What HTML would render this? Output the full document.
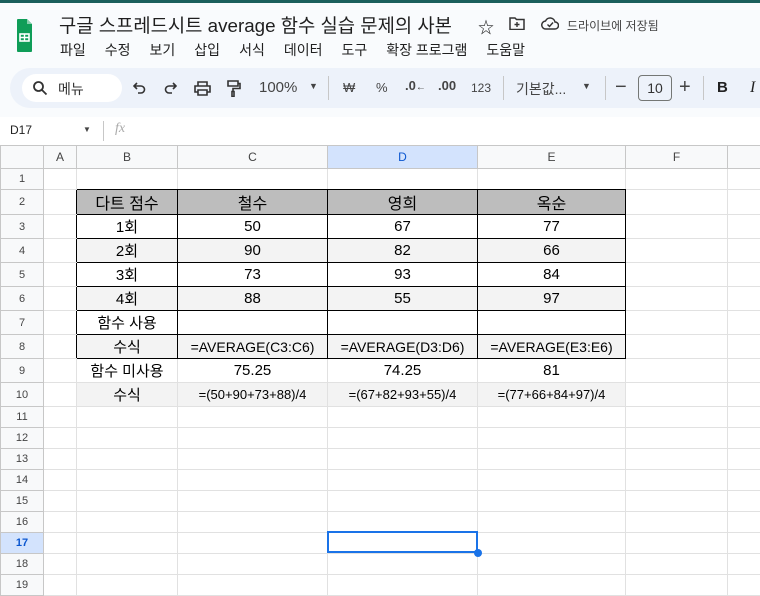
<!DOCTYPE html>
<html><head><meta charset="utf-8"><style>
*{margin:0;padding:0;box-sizing:border-box}
body{width:760px;height:593px;overflow:hidden;background:#f9fbfd;font-family:"Liberation Sans","Noto Sans CJK KR",sans-serif;position:relative;color:#1f1f1f}
.a{position:absolute;white-space:nowrap}
.menu span{margin-right:19px}
.tb{color:#444;font-size:14px}
table{position:absolute;left:0;top:145px;border-collapse:collapse;table-layout:fixed;background:#fff;width:760px}
td{border:1px solid #e1e1e1;font-size:15px;text-align:center;padding:0;overflow:hidden;white-space:nowrap;color:#000}
td.h{background:#f8f9fa;color:#444;font-size:11px;border-color:#c7c7c7}
tr.hd td{font-size:12px}
td.k{border-color:#000}
td.g{background:#bdbdbd}
td.f{background:#f3f3f3}
td.ra{border-right-color:#000}
td.bb{border-bottom-color:#000}
.s{font-size:14px}
</style></head><body>
<div class="a" style="left:0;top:0;width:760px;height:3px;background:#1b5f5c"></div>
<svg class="a" style="left:17px;top:18px" width="15" height="35" viewBox="0 0 15 35"><path d="M1 1h9l5 5v27a1 1 0 0 1-1 1H1a1 1 0 0 1-1-1V2a1 1 0 0 1 1-1z" fill="#0f9d58"/><path d="M10 1v5h5z" fill="#87ceac"/><rect x="3" y="16" width="9" height="7" fill="none" stroke="#fff" stroke-width="1.6"/><path d="M3 19.5h9M7.5 16v7" stroke="#fff" stroke-width="1.4"/></svg>
<div class="a" style="left:59px;top:11px;font-size:18.8px;color:#1f1f1f">구글 스프레드시트 average 함수 실습 문제의 사본</div>
<div class="a" style="left:478px;top:14px;font-size:16px">☆</div>
<svg class="a" style="left:509px;top:17px" width="16" height="13" viewBox="0 0 16 13"><path d="M1 1h5l1.5 1.5H15v10H1z" fill="none" stroke="#333" stroke-width="1.5"/><path d="M8 5v5M5.5 7.5h5" stroke="#333" stroke-width="1.4"/></svg>
<svg class="a" style="left:541px;top:16px" width="18" height="14" viewBox="0 0 18 14"><path d="M5 13h9a3.5 3.5 0 0 0 0-7 5 5 0 0 0-9.5-1A4 4 0 0 0 5 13z" fill="none" stroke="#333" stroke-width="1.5"/><path d="M6.5 8.5l2 2 3.5-4" fill="none" stroke="#333" stroke-width="1.4"/></svg>
<div class="a" style="left:567px;top:17px;font-size:12px;color:#444">드라이브에 저장됨</div>
<div class="a menu" style="left:60px;top:40px;font-size:14px"><span>파일</span><span>수정</span><span>보기</span><span>삽입</span><span>서식</span><span>데이터</span><span>도구</span><span>확장 프로그램</span><span>도움말</span></div>
<div class="a" style="left:10px;top:68px;width:780px;height:40px;border-radius:20px;background:#edf2fa"></div>
<div class="a" style="left:22px;top:74px;width:100px;height:28px;border-radius:14px;background:#fff"></div>
<svg class="a" style="left:32px;top:80px" width="16" height="16" viewBox="0 0 16 16"><circle cx="6.5" cy="6.5" r="4.5" fill="none" stroke="#333" stroke-width="1.8"/><path d="M10 10l4.5 4.5" stroke="#333" stroke-width="1.8"/></svg>
<div class="a tb" style="left:58px;top:79px;color:#333">메뉴</div>
<svg class="a" style="left:133px;top:82px" width="13" height="13" viewBox="0 0 13 13"><path d="M4 1L1 4l3 3M1 4h7a3.5 3.5 0 0 1 0 7H5" fill="none" stroke="#333" stroke-width="1.6"/></svg>
<svg class="a" style="left:164px;top:82px" width="13" height="13" viewBox="0 0 13 13"><path d="M9 1l3 3-3 3M12 4H5a3.5 3.5 0 0 0 0 7h3" fill="none" stroke="#333" stroke-width="1.6"/></svg>
<svg class="a" style="left:194px;top:81px" width="17" height="15" viewBox="0 0 17 15"><path d="M4 5V1h9v4M4 11H1V5h15v6h-3M4 9h9v5H4z" fill="none" stroke="#333" stroke-width="1.6"/></svg>
<svg class="a" style="left:227px;top:80px" width="14" height="17" viewBox="0 0 14 17"><path d="M1 1h10v5H1zM11 3.5h2v5H6v3M5 11.5h2v5H5z" fill="none" stroke="#333" stroke-width="1.6"/></svg>
<div class="a tb" style="left:259px;top:79px;font-size:15px">100%</div>
<div class="a tb" style="left:309px;top:81px;font-size:9px">▼</div>
<div class="a" style="left:328px;top:76px;width:1px;height:24px;background:#c7c7c7"></div>
<div class="a tb" style="left:343px;top:80px;font-size:13px">₩</div>
<div class="a tb" style="left:376px;top:80px;font-size:13px">%</div>
<div class="a tb" style="left:405px;top:78px;font-size:13px;font-weight:bold">.0<span style="font-size:10px">←</span></div>
<div class="a tb" style="left:438px;top:78px;font-size:13px;font-weight:bold">.00</div>
<div class="a tb" style="left:471px;top:81px;font-size:12px">123</div>
<div class="a" style="left:503px;top:76px;width:1px;height:24px;background:#c7c7c7"></div>
<div class="a tb" style="left:516px;top:79px">기본값...</div>
<div class="a tb" style="left:582px;top:81px;font-size:9px">▼</div>
<div class="a" style="left:605px;top:76px;width:1px;height:24px;background:#c7c7c7"></div>
<div class="a tb" style="left:615px;top:76px;font-size:20px">−</div>
<div class="a" style="left:638px;top:75px;width:34px;height:26px;border:1px solid #747775;border-radius:4px;text-align:center;font-size:14px;line-height:24px;color:#333">10</div>
<div class="a tb" style="left:679px;top:76px;font-size:20px">+</div>
<div class="a" style="left:703px;top:76px;width:1px;height:24px;background:#c7c7c7"></div>
<div class="a tb" style="left:717px;top:79px;font-weight:bold;font-size:15px;color:#222">B</div>
<div class="a tb" style="left:750px;top:79px;font-style:italic;font-size:16px;font-family:'Liberation Serif',serif;color:#222">I</div>
<div class="a" style="left:0;top:117px;width:760px;height:28px;background:#fff"></div>
<div class="a" style="left:10px;top:123px;font-size:12px;color:#222">D17</div>
<div class="a" style="left:83px;top:125px;font-size:8px;color:#444">▼</div>
<div class="a" style="left:103px;top:121px;width:1px;height:20px;background:#c7c7c7"></div>
<div class="a" style="left:115px;top:121px;font-size:14px;font-style:italic;color:#aaa;font-family:'Liberation Serif',serif">fx</div>
<table>
<colgroup><col style="width:43px"><col style="width:33px"><col style="width:101px"><col style="width:150px"><col style="width:150px"><col style="width:148px"><col style="width:102px"><col style="width:33px"></colgroup>
<tr class="hd" style="height:23px"><td class="h"></td><td class="h">A</td><td class="h">B</td><td class="h">C</td><td class="h" style="background:#d3e3fd;color:#0b57d0">D</td><td class="h">E</td><td class="h">F</td><td class="h"></td></tr>
<tr style="height:21px"><td class="h">1</td><td></td><td class="bb"></td><td class="bb"></td><td class="bb"></td><td class="bb"></td><td></td><td></td></tr>
<tr style="height:24px"><td class="h">2</td><td class="ra"></td><td class="k g" style="font-size:16px">다트 점수</td><td class="k g" style="font-size:16px">철수</td><td class="k g" style="font-size:16px">영희</td><td class="k g" style="font-size:16px">옥순</td><td></td><td></td></tr>
<tr style="height:24px"><td class="h">3</td><td class="ra"></td><td class="k">1회</td><td class="k">50</td><td class="k">67</td><td class="k">77</td><td></td><td></td></tr>
<tr style="height:24px"><td class="h">4</td><td class="ra"></td><td class="k f">2회</td><td class="k f">90</td><td class="k f">82</td><td class="k f">66</td><td></td><td></td></tr>
<tr style="height:24px"><td class="h">5</td><td class="ra"></td><td class="k">3회</td><td class="k">73</td><td class="k">93</td><td class="k">84</td><td></td><td></td></tr>
<tr style="height:24px"><td class="h">6</td><td class="ra"></td><td class="k f">4회</td><td class="k f">88</td><td class="k f">55</td><td class="k f">97</td><td></td><td></td></tr>
<tr style="height:24px"><td class="h">7</td><td class="ra"></td><td class="k">함수 사용</td><td class="k"></td><td class="k"></td><td class="k"></td><td></td><td></td></tr>
<tr style="height:24px"><td class="h">8</td><td class="ra"></td><td class="k f">수식</td><td class="k f s">=AVERAGE(C3:C6)</td><td class="k f s">=AVERAGE(D3:D6)</td><td class="k f s">=AVERAGE(E3:E6)</td><td></td><td></td></tr>
<tr style="height:24px"><td class="h">9</td><td></td><td>함수 미사용</td><td>75.25</td><td>74.25</td><td>81</td><td></td><td></td></tr>
<tr style="height:24px"><td class="h">10</td><td></td><td class="f">수식</td><td class="f" style="font-size:13px">=(50+90+73+88)/4</td><td class="f" style="font-size:13px">=(67+82+93+55)/4</td><td class="f" style="font-size:13px">=(77+66+84+97)/4</td><td></td><td></td></tr>
<tr style="height:21px"><td class="h">11</td><td></td><td></td><td></td><td></td><td></td><td></td><td></td></tr>
<tr style="height:21px"><td class="h">12</td><td></td><td></td><td></td><td></td><td></td><td></td><td></td></tr>
<tr style="height:21px"><td class="h">13</td><td></td><td></td><td></td><td></td><td></td><td></td><td></td></tr>
<tr style="height:21px"><td class="h">14</td><td></td><td></td><td></td><td></td><td></td><td></td><td></td></tr>
<tr style="height:21px"><td class="h">15</td><td></td><td></td><td></td><td></td><td></td><td></td><td></td></tr>
<tr style="height:21px"><td class="h">16</td><td></td><td></td><td></td><td></td><td></td><td></td><td></td></tr>
<tr style="height:21px"><td class="h" style="background:#d3e3fd;color:#0b57d0;font-weight:bold">17</td><td></td><td></td><td></td><td></td><td></td><td></td><td></td></tr>
<tr style="height:21px"><td class="h">18</td><td></td><td></td><td></td><td></td><td></td><td></td><td></td></tr>
<tr style="height:21px"><td class="h">19</td><td></td><td></td><td></td><td></td><td></td><td></td><td></td></tr>
</table>
<div class="a" style="left:327px;top:531px;width:151px;height:22px;border:2px solid #1a73e8"></div>
<div class="a" style="left:474px;top:549px;width:8px;height:8px;border-radius:50%;background:#1a73e8"></div>
</body></html>
